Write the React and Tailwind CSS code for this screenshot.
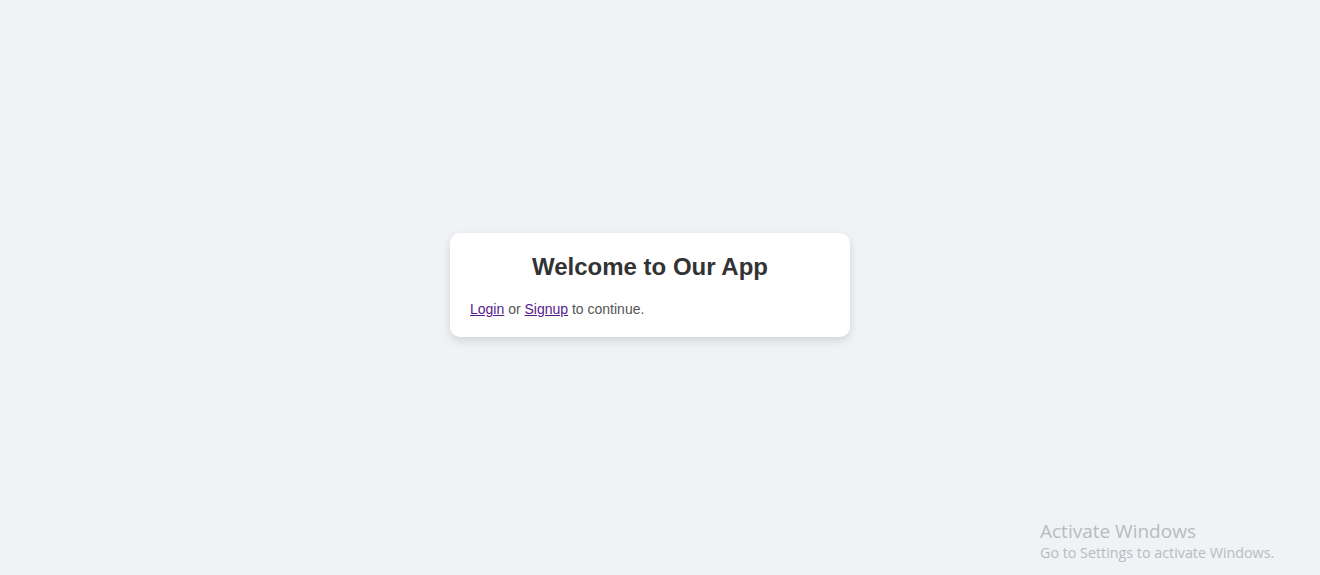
export default function App() {
  return (
    <div
      className="relative flex items-center justify-center min-h-screen pr-[20px] pb-[5px] bg-[#f0f2f5]"
      style={{ fontFamily: '"Liberation Sans", Arial, sans-serif' }}
    >
      <div className="w-[400px] p-5 bg-white rounded-[10px] shadow-[0_4px_10px_rgba(0,0,0,0.12)]">
        <h2 className="text-[24px] leading-[28px] font-bold text-center text-[#333]">Welcome to Our App</h2>
        <p className="mt-5 text-[14px] leading-[16px] text-[#555]">
          <a href="#" className="underline text-[#551a8b]">Login</a> or{" "}
          <a href="#" className="underline text-[#551a8b]">Signup</a> to continue.
        </p>
      </div>

      <div
        className="absolute left-[1040px] top-[518px] text-[#b9bbbe]"
        style={{ fontFamily: '"Open Sans", "Noto Sans", sans-serif' }}
      >
        <div className="text-[19px] leading-[26px]">Activate Windows</div>
        <div className="text-[14.3px] leading-[18px]">Go to Settings to activate Windows.</div>
      </div>
    </div>
  )
}
